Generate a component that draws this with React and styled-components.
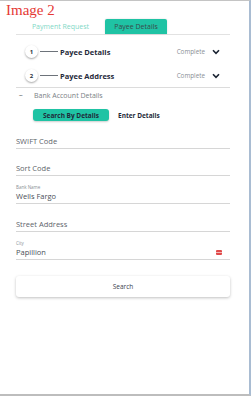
import styled, { createGlobalStyle } from "styled-components";

const GlobalStyle = createGlobalStyle`
  html, body {
    margin: 0;
    padding: 0;
    background: #ffffff;
  }
  * {
    box-sizing: border-box;
  }
`;

const Frame = styled.div`
  width: 251px;
  height: 396px;
  border-top: 1px solid #c4c4c4;
  border-right: 2px solid #a9bcd2;
  border-bottom: 2px solid #bdbdbd;
  background: #fff;
  font-family: "Open Sans", "Liberation Sans", sans-serif;
  color: #2a3442;
`;

const Caption = styled.div`
  font-family: "Liberation Serif", serif;
  font-size: 15px;
  color: #e53935;
  padding: 2px 0 0 6px;
  line-height: 15px;
`;

const Body = styled.div`
  margin: 0 19px 0 16px;
`;

const Tabs = styled.div`
  display: flex;
  align-items: flex-end;
  height: 16px;
  border-bottom: 1px solid #e2e2e2;
  margin-top: 1px;
`;

const Tab = styled.div`
  height: 15px;
  display: flex;
  align-items: center;
  justify-content: center;
  font-size: 7px;
  border-radius: 2px 2px 0 0;
  ${(p) =>
    p.$active
      ? `
    width: 62px;
    background: #1fc3a4;
    color: #3a4a4a;
    box-shadow: 0 0 2px rgba(0,0,0,0.15);
  `
      : `
    width: 89px;
    color: #7fd8c6;
  `}
`;

const Steps = styled.div`
  padding: 10px 0 5px 9px;
  display: flex;
  flex-direction: column;
  gap: 11px;
  border-bottom: 1px solid #dcdcdc;
`;

const StepRow = styled.div`
  display: flex;
  align-items: center;
  height: 13px;
`;

const StepNum = styled.div`
  width: 13px;
  height: 13px;
  border-radius: 50%;
  background: #fff;
  box-shadow: 0 1px 2px rgba(0, 0, 0, 0.35);
  font-size: 6px;
  font-weight: 700;
  display: flex;
  align-items: center;
  justify-content: center;
  color: #2a3442;
`;

const Connector = styled.div`
  width: 18px;
  height: 1px;
  background: #6d737a;
  margin: 0 2px 0 2px;
`;

const StepTitle = styled.div`
  font-size: 7.5px;
  font-weight: 700;
  color: #1f2a3a;
  flex: 1;
`;

const Status = styled.div`
  font-size: 6.3px;
  color: #8a8f96;
  margin-right: 7px;
`;

const Chevron = styled.svg`
  width: 8px;
  height: 6px;
  margin-right: 10px;
`;

const SectionHead = styled.div`
  display: flex;
  align-items: center;
  height: 13px;
  margin-top: 1px;
  font-size: 7px;
  color: #7a7f86;
`;

const Dash = styled.span`
  width: 18px;
  padding-left: 3px;
  color: #444;
`;

const Toggle = styled.div`
  display: flex;
  align-items: center;
  gap: 9px;
  margin: 7px 0 0 17px;
`;

const ToggleBtn = styled.div`
  height: 12px;
  display: flex;
  align-items: center;
  justify-content: center;
  font-size: 6.5px;
  font-weight: 700;
  color: #1f2a3a;
  border-radius: 3px;
  ${(p) =>
    p.$active &&
    `
    width: 76px;
    background: #1fc3a4;
    box-shadow: 0 1px 2px rgba(0,0,0,0.2);
  `}
`;

const Fields = styled.div`
  display: flex;
  flex-direction: column;
  margin-top: 14px;
`;

const Field = styled.div`
  height: ${(p) => p.$h}px;
  display: flex;
  flex-direction: column;
  justify-content: flex-end;
  border-bottom: 1px solid #d6d6d6;
  margin-top: ${(p) => p.$mt || 0}px;
`;

const Label = styled.div`
  font-size: 4.5px;
  color: #8a8f96;
  margin-bottom: 1px;
`;

const Value = styled.div`
  display: flex;
  align-items: center;
  justify-content: space-between;
  font-size: 7.5px;
  color: ${(p) => (p.$placeholder ? "#5e646b" : "#4a5058")};
  padding-bottom: 2px;
`;

const ErrorMark = styled.span`
  width: 6px;
  height: 5px;
  background: #e04a4a;
  border-radius: 1px;
  margin-right: 8px;
  display: flex;
  align-items: center;
  &::after {
    content: "";
    width: 100%;
    height: 1px;
    background: #f4b5b5;
  }
`;

const SearchButton = styled.div`
  margin-top: 16px;
  height: 21px;
  border-radius: 3px;
  background: #fff;
  box-shadow: 0 1px 3px rgba(0, 0, 0, 0.25);
  display: flex;
  align-items: center;
  justify-content: center;
  font-size: 6.5px;
  color: #3a4350;
`;

function Down() {
  return (
    <Chevron viewBox="0 0 8 6">
      <path d="M1 1.2 L4 4.3 L7 1.2" fill="none" stroke="#1b2433" strokeWidth="1.6" />
    </Chevron>
  );
}

export default function App() {
  const steps = [
    { n: 1, title: "Payee Details" },
    { n: 2, title: "Payee Address" },
  ];

  return (
    <>
      <GlobalStyle />
      <Frame>
        <Caption>Image 2</Caption>
        <Body>
          <Tabs>
            <Tab>Payment Request</Tab>
            <Tab $active>Payee Details</Tab>
          </Tabs>
          <Steps>
            {steps.map((s) => (
              <StepRow key={s.n}>
                <StepNum>{s.n}</StepNum>
                <Connector />
                <StepTitle>{s.title}</StepTitle>
                <Status>Complete</Status>
                <Down />
              </StepRow>
            ))}
          </Steps>
          <SectionHead>
            <Dash>−</Dash>
            Bank Account Details
          </SectionHead>
          <Toggle>
            <ToggleBtn $active>Search By Details</ToggleBtn>
            <ToggleBtn>Enter Details</ToggleBtn>
          </Toggle>
          <Fields>
            <Field $h={14}>
              <Value $placeholder>SWIFT Code</Value>
            </Field>
            <Field $h={14} $mt={13}>
              <Value $placeholder>Sort Code</Value>
            </Field>
            <Field $h={22} $mt={6}>
              <Label>Bank Name</Label>
              <Value>Wells Fargo</Value>
            </Field>
            <Field $h={14} $mt={14}>
              <Value $placeholder>Street Address</Value>
            </Field>
            <Field $h={22} $mt={6}>
              <Label>City</Label>
              <Value>
                Papillion
                <ErrorMark />
              </Value>
            </Field>
          </Fields>
          <SearchButton>Search</SearchButton>
        </Body>
      </Frame>
    </>
  );
}
